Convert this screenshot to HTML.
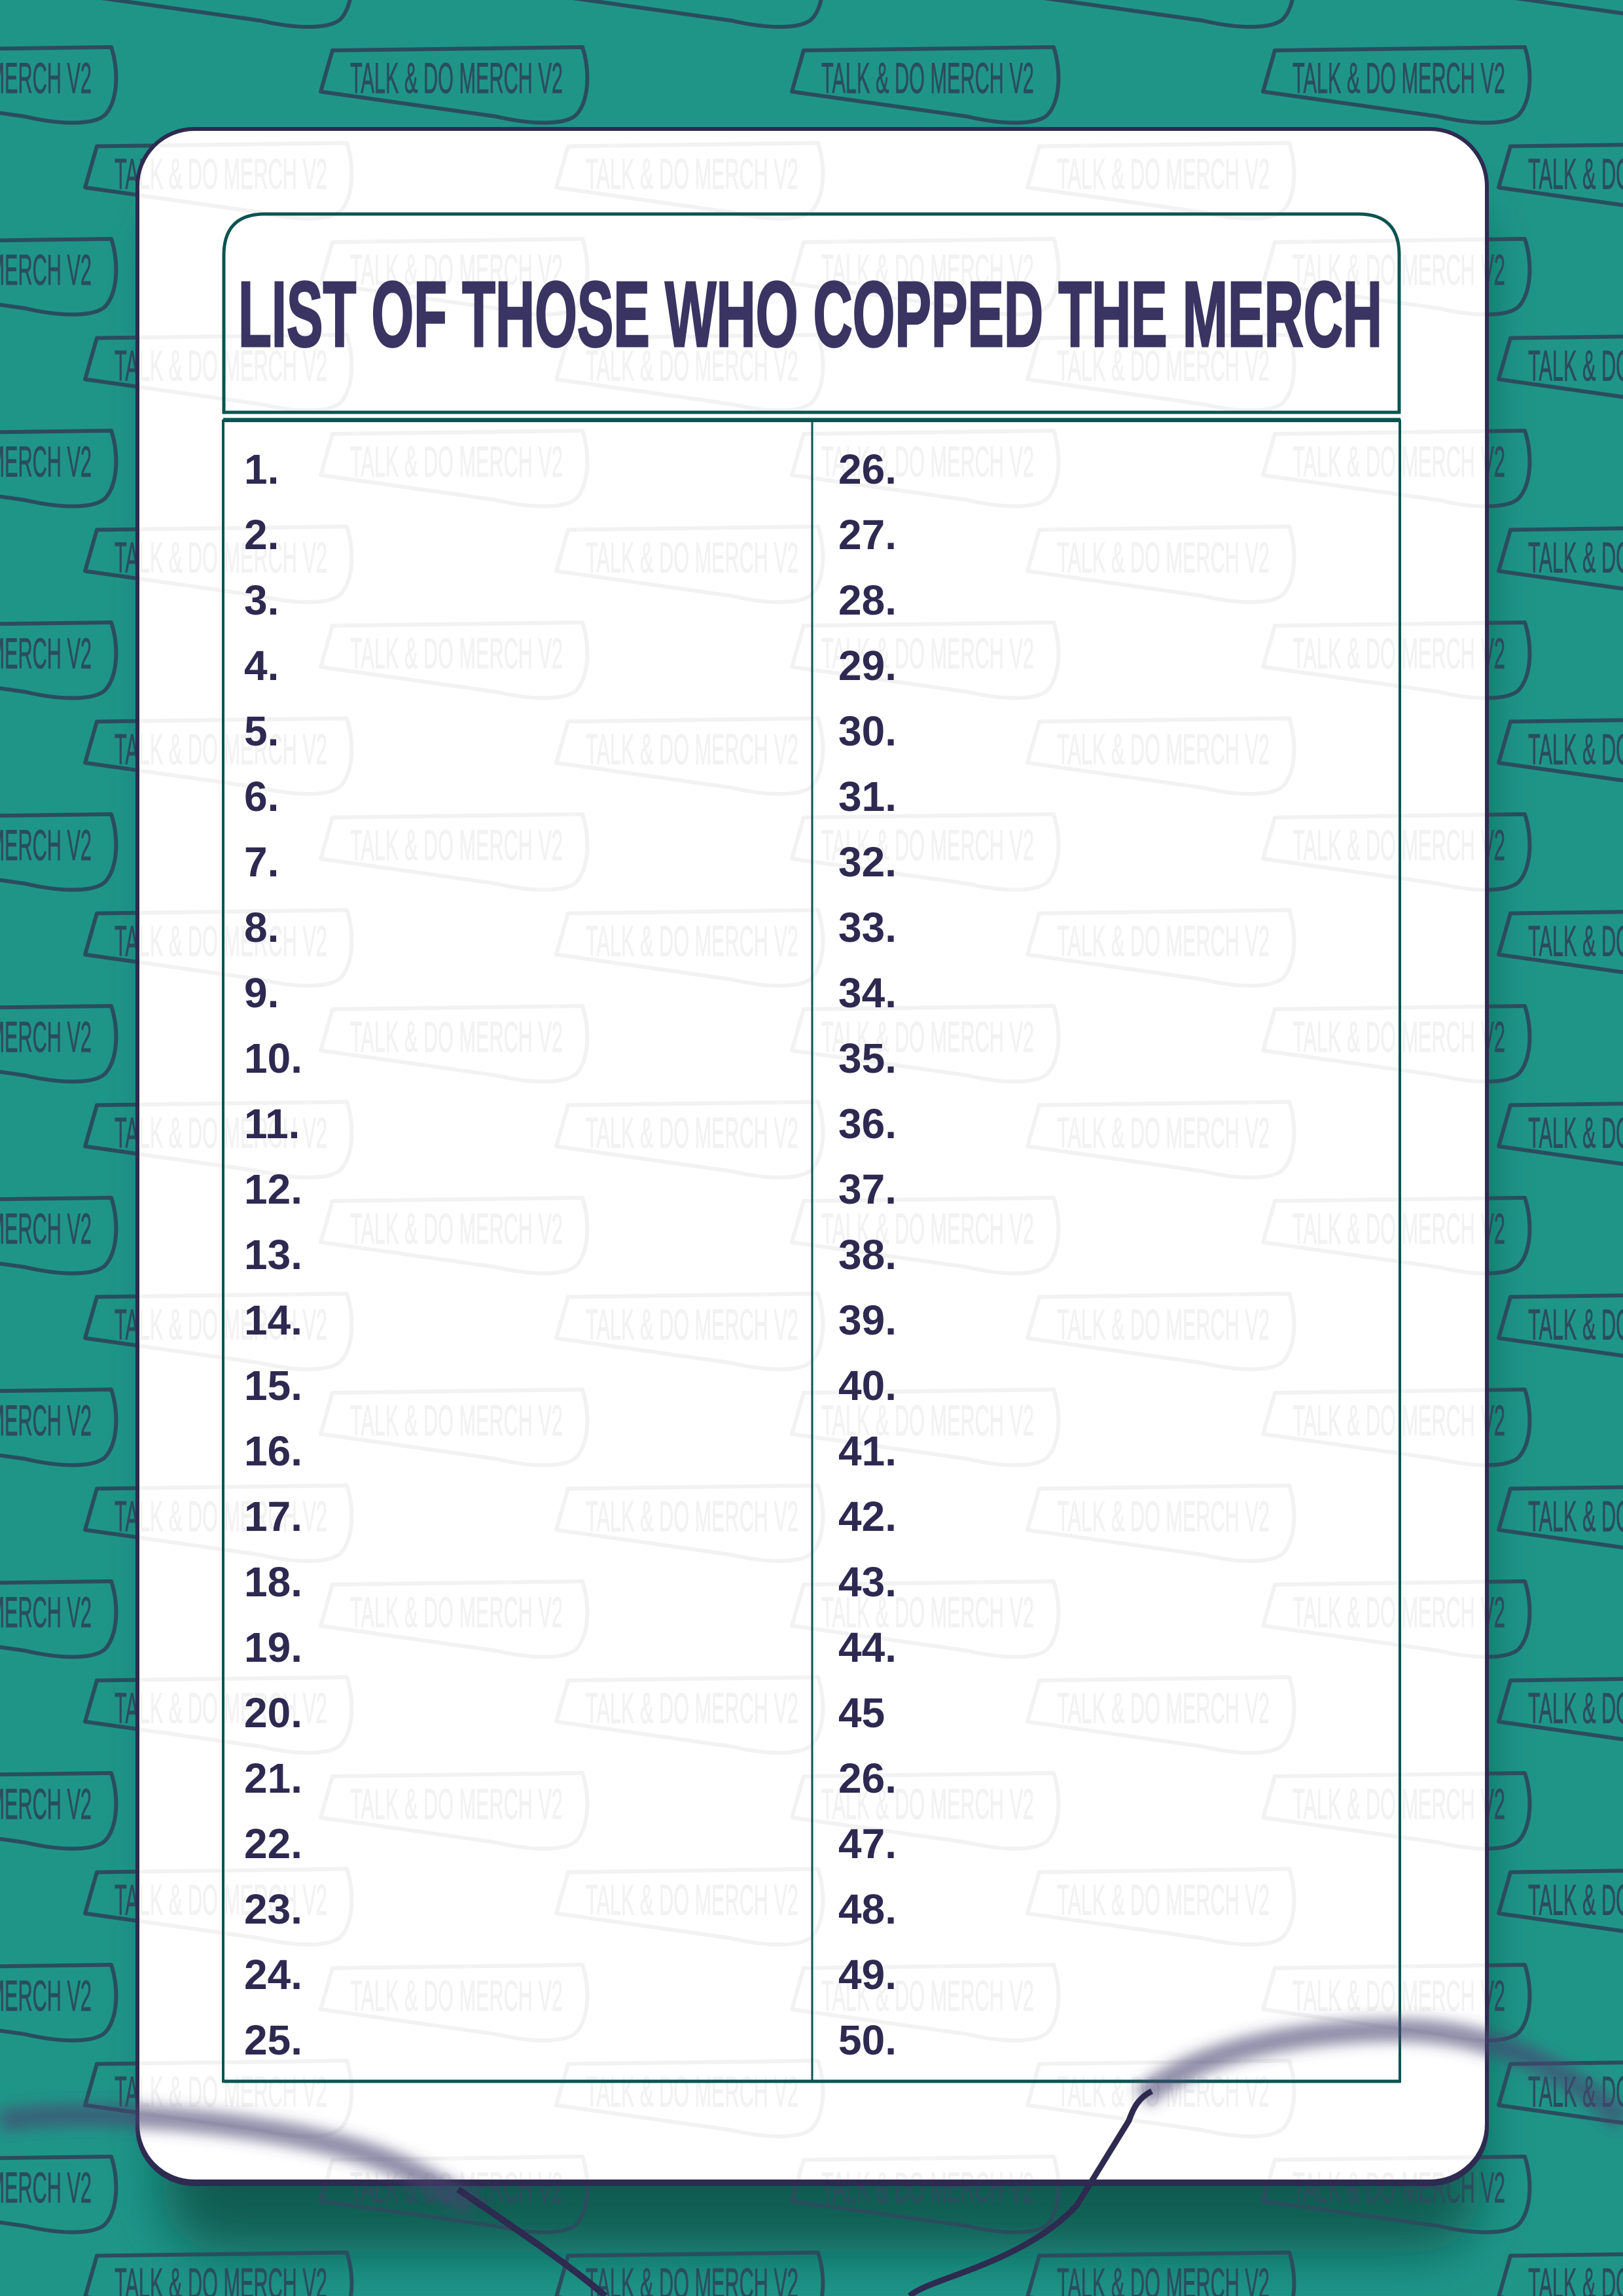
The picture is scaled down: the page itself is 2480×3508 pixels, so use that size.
<!DOCTYPE html>
<html><head><meta charset="utf-8"><style>
html,body{margin:0;padding:0;background:#1f9588;}
svg{display:block}
</style></head><body>
<svg width="2480" height="3508" viewBox="0 0 2480 3508" xmlns="http://www.w3.org/2000/svg">
<defs>
  <g id="badge">
    <path d="M-208,12 L-190,-51 L192,-56 C204,-20 202,28 182,48 C166,62 120,64 60,50 L-208,12 Z" fill="none" stroke-width="6" stroke-linejoin="round"/>
    <text x="-163" y="14" font-family="'Liberation Sans',sans-serif" font-size="66" textLength="325" lengthAdjust="spacingAndGlyphs">TALK &amp; DO MERCH V2</text>
  </g>
  <pattern id="pdark" patternUnits="userSpaceOnUse" x="0" y="0" width="720" height="293">
    <g stroke="#2a4d5e" fill="#2a4d5e">
      <use href="#badge" x="698" y="128"/>
      <use href="#badge" x="-22" y="128"/>
      <use href="#badge" x="338" y="274.5"/>
      <use href="#badge" x="338" y="-18.5"/>
    </g>
  </pattern>
  <pattern id="plight" patternUnits="userSpaceOnUse" x="0" y="0" width="720" height="293">
    <g stroke="#f2f2f2" fill="#f2f2f2">
      <use href="#badge" x="698" y="128"/>
      <use href="#badge" x="-22" y="128"/>
      <use href="#badge" x="338" y="274.5"/>
      <use href="#badge" x="338" y="-18.5"/>
    </g>
  </pattern>
  <filter id="blur" x="-20%" y="-20%" width="140%" height="140%"><feGaussianBlur stdDeviation="40"/></filter>
  <filter id="blur2" x="-20%" y="-50%" width="140%" height="200%"><feGaussianBlur stdDeviation="10"/></filter>
</defs>
<rect width="2480" height="3508" fill="#1f9588"/>
<!-- shadow -->
<rect x="250" y="300" width="2010" height="3140" rx="90" fill="#0b5248" opacity="0.85" filter="url(#blur)"/>
<rect width="2480" height="3508" fill="url(#pdark)"/>
<!-- card -->
<rect x="207" y="194" width="2068" height="3146" rx="90" fill="#2e2a50"/>
<rect x="213" y="200" width="2056" height="3130" rx="84" fill="#fff"/>
<rect x="213" y="200" width="2056" height="3130" rx="84" fill="url(#plight)"/>
<!-- header box -->
<path d="M342,630 L342,390 Q342,327 405,327 L2076,327 Q2138,327 2138,390 L2138,630 Z" fill="none" stroke="#0b5450" stroke-width="5"/>
<text x="364" y="529" font-family="'Liberation Sans',sans-serif" font-weight="bold" font-size="142" fill="#3a3462" stroke="#3a3462" stroke-width="3" textLength="1748" lengthAdjust="spacingAndGlyphs">LIST OF THOSE WHO COPPED THE MERCH</text>
<!-- table -->
<rect x="341" y="643" width="1798" height="2537" fill="none" stroke="#0b5450" stroke-width="4"/>
<line x1="341" y1="641" x2="2140" y2="641" stroke="#0b5450" stroke-width="5"/>
<line x1="341" y1="3180" x2="2140" y2="3180" stroke="#0b5450" stroke-width="5"/>
<line x1="1241" y1="643" x2="1241" y2="3180" stroke="#0b5450" stroke-width="3"/>
<g font-family="'Liberation Sans',sans-serif" font-weight="bold" font-size="64" fill="#2d2950">
<text x="373" y="739">1.</text><text x="373" y="839">2.</text><text x="373" y="939">3.</text><text x="373" y="1039">4.</text><text x="373" y="1139">5.</text>
<text x="373" y="1239">6.</text><text x="373" y="1339">7.</text><text x="373" y="1439">8.</text><text x="373" y="1539">9.</text><text x="373" y="1639">10.</text>
<text x="373" y="1739">11.</text><text x="373" y="1839">12.</text><text x="373" y="1939">13.</text><text x="373" y="2039">14.</text><text x="373" y="2139">15.</text>
<text x="373" y="2239">16.</text><text x="373" y="2339">17.</text><text x="373" y="2439">18.</text><text x="373" y="2539">19.</text><text x="373" y="2639">20.</text>
<text x="373" y="2739">21.</text><text x="373" y="2839">22.</text><text x="373" y="2939">23.</text><text x="373" y="3039">24.</text><text x="373" y="3139">25.</text>
<text x="1281" y="739">26.</text><text x="1281" y="839">27.</text><text x="1281" y="939">28.</text><text x="1281" y="1039">29.</text><text x="1281" y="1139">30.</text>
<text x="1281" y="1239">31.</text><text x="1281" y="1339">32.</text><text x="1281" y="1439">33.</text><text x="1281" y="1539">34.</text><text x="1281" y="1639">35.</text>
<text x="1281" y="1739">36.</text><text x="1281" y="1839">37.</text><text x="1281" y="1939">38.</text><text x="1281" y="2039">39.</text><text x="1281" y="2139">40.</text>
<text x="1281" y="2239">41.</text><text x="1281" y="2339">42.</text><text x="1281" y="2439">43.</text><text x="1281" y="2539">44.</text><text x="1281" y="2639">45</text>
<text x="1281" y="2739">26.</text><text x="1281" y="2839">47.</text><text x="1281" y="2939">48.</text><text x="1281" y="3039">49.</text><text x="1281" y="3139">50.</text>
</g>
<!-- curves -->
<path d="M0,3240 C120,3222 300,3235 446,3262 C560,3285 630,3310 720,3370" fill="none" stroke="#4a4270" stroke-opacity="0.6" stroke-width="36" filter="url(#blur2)"/>
<path d="M700,3345 C780,3400 870,3460 925,3508" fill="none" stroke="#2e2a50" stroke-width="10"/>
<path d="M1745,3205 C1830,3130 2000,3100 2150,3102 C2300,3106 2400,3170 2480,3240" fill="none" stroke="#4a4270" stroke-opacity="0.6" stroke-width="36" filter="url(#blur2)"/>
<path d="M1760,3195 C1740,3205 1732,3220 1725,3240 L1645,3370 C1560,3460 1420,3480 1390,3508" fill="none" stroke="#2e2a50" stroke-width="9"/>
</svg>
</body></html>
